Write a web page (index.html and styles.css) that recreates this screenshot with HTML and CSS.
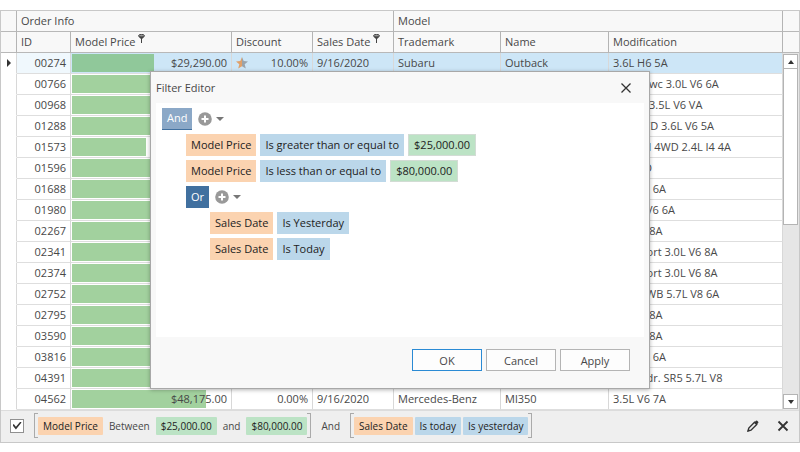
FILE: index.html
```html
<!DOCTYPE html>
<html lang="en">
<head>
    <meta charset="UTF-8">
    <meta name="viewport" content="width=device-width, initial-scale=1.0">
    <title>Filter Editor</title>
    <link rel="stylesheet" href="styles.css">
</head>
<body>
    <div class="grid">
        <div class="grid-main">
            <table class="data">
                <colgroup>
                    <col class="col-mark">
                    <col class="col-id">
                    <col class="col-price">
                    <col class="col-discount">
                    <col class="col-date">
                    <col class="col-trademark">
                    <col class="col-name">
                    <col>
                </colgroup>
                <thead>
                    <tr>
                        <th></th>
                        <th colspan="4">Order Info</th>
                        <th colspan="3">Model</th>
                    </tr>
                    <tr>
                        <th></th>
                        <th>ID</th>
                        <th>Model Price <svg class="pin" viewBox="0 0 7 9"><ellipse cx="3.5" cy="1.8" rx="3" ry="1.4" fill="#999" stroke="#444"/><path d="M.5 2.5 3 5v4h1V5l2.500-2.500z" fill="#444"/></svg></th>
                        <th>Discount</th>
                        <th>Sales Date <svg class="pin" viewBox="0 0 7 9"><ellipse cx="3.5" cy="1.8" rx="3" ry="1.4" fill="#999" stroke="#444"/><path d="M.5 2.5 3 5v4h1V5l2.500-2.500z" fill="#444"/></svg></th>
                        <th>Trademark</th>
                        <th>Name</th>
                        <th>Modification</th>
                    </tr>
                </thead>
                <tbody>
                    <tr class="selected">
                        <td class="mark"><svg class="row-arrow" viewBox="0 0 4 8"><path d="M0 0l4 4-4 4z" fill="#333"/></svg></td>
                        <td class="id">00274</td>
                        <td class="price"><div class="price-box"><div class="bar" style="width: 52%"></div><span>$29,290.00</span></div></td>
                        <td class="discount"><div class="discount-box"><svg class="star" viewBox="0 0 12 12"><path d="M6 0l1.700 4.100 4.300.3-3.300 2.800 1.100 4.300L6 9.200z" fill="#9aa3ab"/><path d="M6 0L4.300 4.100 0 4.400l3.300 2.800-1.100 4.300L6 9.200z" fill="#e0a069"/></svg><span>10.00%</span></div></td>
                        <td>9/16/2020</td><td>Subaru</td><td>Outback</td><td>3.6L H6 5A</td>
                    </tr>
                    <tr>
                        <td></td><td class="id">00766</td>
                        <td class="price"><div class="price-box"><div class="bar" style="width: 90%"></div></div></td>
                        <td></td><td></td><td></td><td></td><td>Coupe wc 3.0L V6 6A</td>
                    </tr>
                    <tr>
                        <td></td><td class="id">00968</td>
                        <td class="price"><div class="price-box"><div class="bar" style="width: 62%"></div></div></td>
                        <td></td><td></td><td></td><td></td><td>Coupe 3.5L V6 VA</td>
                    </tr>
                    <tr>
                        <td></td><td class="id">01288</td>
                        <td class="price"><div class="price-box"><div class="bar" style="width: 58%"></div></div></td>
                        <td></td><td></td><td></td><td></td><td>SLT 4WD 3.6L V6 5A</td>
                    </tr>
                    <tr>
                        <td></td><td class="id">01573</td>
                        <td class="price"><div class="price-box"><div class="bar" style="width: 47%"></div></div></td>
                        <td></td><td></td><td></td><td></td><td>Limited 4WD 2.4L I4 4A</td>
                    </tr>
                    <tr>
                        <td></td><td class="id">01596</td>
                        <td class="price"><div class="price-box"><div class="bar" style="width: 70%"></div></div></td>
                        <td></td><td></td><td></td><td></td><td>LT 4WD</td>
                    </tr>
                    <tr>
                        <td></td><td class="id">01688</td>
                        <td class="price"><div class="price-box"><div class="bar" style="width: 80%"></div></div></td>
                        <td></td><td></td><td></td><td></td><td>4.8L V8 6A</td>
                    </tr>
                    <tr>
                        <td></td><td class="id">01980</td>
                        <td class="price"><div class="price-box"><div class="bar" style="width: 66%"></div></div></td>
                        <td></td><td></td><td></td><td></td><td>S 3.0L V6 6A</td>
                    </tr>
                    <tr>
                        <td></td><td class="id">02267</td>
                        <td class="price"><div class="price-box"><div class="bar" style="width: 75%"></div></div></td>
                        <td></td><td></td><td></td><td></td><td>3.0L I6 8A</td>
                    </tr>
                    <tr>
                        <td></td><td class="id">02341</td>
                        <td class="price"><div class="price-box"><div class="bar" style="width: 88%"></div></div></td>
                        <td></td><td></td><td></td><td></td><td>SLE Sport 3.0L V6 8A</td>
                    </tr>
                    <tr>
                        <td></td><td class="id">02374</td>
                        <td class="price"><div class="price-box"><div class="bar" style="width: 92%"></div></div></td>
                        <td></td><td></td><td></td><td></td><td>SLE Sport 3.0L V6 8A</td>
                    </tr>
                    <tr>
                        <td></td><td class="id">02752</td>
                        <td class="price"><div class="price-box"><div class="bar" style="width: 60%"></div></div></td>
                        <td></td><td></td><td></td><td></td><td>4WD LWB 5.7L V8 6A</td>
                    </tr>
                    <tr>
                        <td></td><td class="id">02795</td>
                        <td class="price"><div class="price-box"><div class="bar" style="width: 84%"></div></div></td>
                        <td></td><td></td><td></td><td></td><td>3.0L I6 8A</td>
                    </tr>
                    <tr>
                        <td></td><td class="id">03590</td>
                        <td class="price"><div class="price-box"><div class="bar" style="width: 86%"></div></div></td>
                        <td></td><td></td><td></td><td></td><td>3.0L I6 8A</td>
                    </tr>
                    <tr>
                        <td></td><td class="id">03816</td>
                        <td class="price"><div class="price-box"><div class="bar" style="width: 78%"></div></div></td>
                        <td></td><td></td><td></td><td></td><td>4.8L V8 6A</td>
                    </tr>
                    <tr>
                        <td></td><td class="id">04391</td>
                        <td class="price"><div class="price-box"><div class="bar" style="width: 64%"></div></div></td>
                        <td></td><td></td><td></td><td></td><td>4WD 4dr. SR5 5.7L V8</td>
                    </tr>
                    <tr>
                        <td></td><td class="id">04562</td>
                        <td class="price"><div class="price-box"><div class="bar" style="width: 85%"></div><span>$48,175.00</span></div></td>
                        <td class="discount">0.00%</td>
                        <td>9/16/2020</td><td>Mercedes-Benz</td><td>Ml350</td><td>3.5L V6 7A</td>
                    </tr>
                </tbody>
            </table>
            <div class="side">
                <div class="side-head"></div>
                <div class="side-head"></div>
                <div class="scrollbar">
                    <button class="scroll-btn" aria-label="Scroll up"><svg viewBox="0 0 6 4"><path d="M0 4l3-4 3 4z"/></svg></button>
                    <div class="thumb"></div>
                    <button class="scroll-btn down" aria-label="Scroll down"><svg viewBox="0 0 6 4"><path d="M0 0l3 4 3-4z"/></svg></button>
                </div>
            </div>
        </div>

        <div class="filter-panel">
            <input type="checkbox" class="filter-check" aria-label="Enable filter" checked>
            <div class="bracket">
                <button class="tag field">Model Price</button>
                <span class="word">Between</span>
                <button class="tag value">$25,000.00</button>
                <span class="word">and</span>
                <button class="tag value">$80,000.00</button>
            </div>
            <span class="joiner">And</span>
            <div class="bracket">
                <button class="tag field">Sales Date</button>
                <button class="tag operator">Is today</button>
                <button class="tag operator">Is yesterday</button>
            </div>
            <div class="panel-tools">
                <button class="tool" aria-label="Edit filter"><svg viewBox="0 0 12 12"><path d="M1 11l.8-3L7.500 2.300l2.200 2.200L4 10.200z" fill="none" stroke="#333" stroke-width="1.400"/><path d="M7.500 2.300L9 .8q.6-.5 1.200 0l1 1q.5.6 0 1.200L9.700 4.500z" fill="#333"/><path d="M.5 11.500l.6-2 1.400 1.400z" fill="#333"/></svg></button>
                <button class="tool" aria-label="Clear filter"><svg viewBox="0 0 12 12"><path d="M1.500 1.500l9 9m0-9l-9 9" stroke="#333" stroke-width="1.800"/></svg></button>
            </div>
        </div>

        <div class="dialog" role="dialog" aria-labelledby="dialogTitle">
            <div class="dialog-head">
                <span id="dialogTitle">Filter Editor</span>
                <button class="close" aria-label="Close"><svg viewBox="0 0 12 12"><path d="M1.500 1.500l9 9m0-9l-9 9" stroke="#333" stroke-width="1.300"/></svg></button>
            </div>
            <ul class="tree">
                <li>
                    <div class="line">
                        <button class="chip logic active">And</button>
                        <button class="add" aria-label="Add condition"><svg class="plus" viewBox="0 0 14 14"><circle cx="7" cy="7" r="6.800"/><path d="M7 3.500v7M3.500 7h7"/></svg><svg class="caret" viewBox="0 0 8 4"><path d="M0 0h8L4 4z"/></svg></button>
                    </div>
                    <ul>
                        <li class="line">
                            <button class="chip field">Model Price</button>
                            <button class="chip operator">Is greater than or equal to</button>
                            <button class="chip value">$25,000.00</button>
                        </li>
                        <li class="line">
                            <button class="chip field">Model Price</button>
                            <button class="chip operator">Is less than or equal to</button>
                            <button class="chip value">$80,000.00</button>
                        </li>
                        <li>
                            <div class="line">
                                <button class="chip logic">Or</button>
                                <button class="add" aria-label="Add condition"><svg class="plus" viewBox="0 0 14 14"><circle cx="7" cy="7" r="6.800"/><path d="M7 3.500v7M3.500 7h7"/></svg><svg class="caret" viewBox="0 0 8 4"><path d="M0 0h8L4 4z"/></svg></button>
                            </div>
                            <ul>
                                <li class="line">
                                    <button class="chip field">Sales Date</button>
                                    <button class="chip operator">Is Yesterday</button>
                                </li>
                                <li class="line">
                                    <button class="chip field">Sales Date</button>
                                    <button class="chip operator">Is Today</button>
                                </li>
                            </ul>
                        </li>
                    </ul>
                </li>
            </ul>
            <div class="dialog-foot">
                <button class="btn primary">OK</button>
                <button class="btn">Cancel</button>
                <button class="btn">Apply</button>
            </div>
        </div>
    </div>
</body>
</html>
```
FILE: styles.css
```css
* {
    box-sizing: border-box;
}

body {
    margin: 0;
    padding-top: 10px;
    font-family: "Segoe UI", "Open Sans", "Noto Sans", sans-serif;
    font-size: 11px;
    color: #484848;
    background: #fff;
}

button {
    margin: 0;
    padding: 0;
    border: none;
    background: none;
    font: inherit;
    color: inherit;
    cursor: pointer;
}

svg {
    display: block;
}

/* Data grid */
.grid {
    position: relative;
    border: 1px solid #c8c8c8;
}

.grid-main {
    display: flex;
}

.data {
    flex: 1;
    width: 0;
    table-layout: fixed;
    border-collapse: separate;
    border-spacing: 0;
}

.col-mark {
    width: 16px;
}

.col-id {
    width: 54px;
}

.col-price {
    width: 161px;
}

.col-discount,
.col-date {
    width: 81px;
}

.col-trademark {
    width: 107px;
}

.col-name {
    width: 108px;
}

th,
td {
    height: 21px;
    padding: 0 4px;
    line-height: 20px;
    text-align: left;
    white-space: nowrap;
    overflow: hidden;
}

th {
    font-weight: normal;
    background: #f8f8f8;
    border-right: 1px solid #b4b4b4;
    border-bottom: 1px solid #b8b8b8;
}

td {
    border-right: 1px solid #d8d8d8;
    border-bottom: 1px solid #dedede;
}

td:first-child {
    border-bottom-color: #fff;
}

.selected td {
    background: #cde6f7;
}

.selected .mark {
    background: #fff;
}

.selected .id {
    background: #f0f8fd;
}

.row-arrow {
    width: 4px;
    height: 8px;
    margin-left: 2px;
}

.pin {
    display: inline-block;
    width: 7px;
    height: 9px;
    vertical-align: 3px;
}

.id,
.discount {
    text-align: right;
}

.data .price {
    padding: 0 1px;
}

.price-box {
    display: grid;
    align-items: center;
    height: 20px;
}

.price-box > * {
    grid-area: 1 / 1;
}

.price-box span {
    padding-right: 3px;
    text-align: right;
}

.bar {
    height: 18px;
    background: #a2d19e;
}

.selected .bar {
    background: #90c89a;
}

.discount-box {
    display: flex;
    align-items: center;
    justify-content: space-between;
}

.star {
    width: 12px;
    height: 12px;
}

/* Scroll column */
.side {
    display: flex;
    flex-direction: column;
    width: 16px;
}

.side-head {
    height: 21px;
    background: #f8f8f8;
    border-bottom: 1px solid #b8b8b8;
}

.scrollbar {
    flex: 1;
    display: flex;
    flex-direction: column;
    padding: 1px 1px 1px 0;
    background: #e6e6e6;
}

.scroll-btn {
    display: flex;
    align-items: center;
    justify-content: center;
    height: 15px;
    background: #fff;
    border: 1px solid #b4b4b4;
}

.scroll-btn svg {
    width: 6px;
    height: 4px;
    fill: #333;
}

.thumb {
    height: 44%;
    background: #fff;
    border: 1px solid #b4b4b4;
    border-top: none;
}

.down {
    margin-top: auto;
}

/* Filter panel */
.filter-panel {
    display: flex;
    align-items: center;
    height: 32px;
    padding: 0 10px 2px 9px;
    font-size: 10px;
    background: #efefef;
    border-top: 1px solid #dcdcdc;
}

.filter-check {
    appearance: none;
    display: grid;
    place-items: center;
    width: 14px;
    height: 14px;
    margin: 0 10px 0 0;
    background: #fff;
    border: 1px solid #909090;
}

.filter-check:checked::before {
    content: "";
    width: 9px;
    height: 8px;
    background: #333;
    clip-path: polygon(0 48%, 14% 32%, 38% 66%, 88% 0, 100% 14%, 38% 100%);
}

.bracket {
    display: flex;
    align-items: center;
    gap: 2px;
    height: 23px;
}

.bracket::before,
.bracket::after {
    content: "";
    width: 3px;
    height: 23px;
    border: 1px solid #aaa;
}

.bracket::before {
    margin-right: -2px;
    border-right: none;
}

.bracket::after {
    margin-left: -2px;
    border-left: none;
}

.tag {
    height: 18px;
    padding: 0 5px;
    line-height: 18px;
    border-radius: 1px;
    color: #222;
}

.word {
    padding: 0 4px;
}

.joiner {
    padding: 0 10px;
}

.field {
    background: #fbd3b0;
}

.operator {
    background: #bbd7ea;
}

.value {
    background: #bce3c5;
}

.panel-tools {
    display: flex;
    gap: 18px;
    margin-left: auto;
}

.tool svg,
.close svg {
    width: 12px;
    height: 12px;
}

/* Filter editor */
.dialog {
    position: absolute;
    top: 60px;
    left: 0;
    right: 0;
    width: 500px;
    margin: 0 auto;
    padding: 0 5px;
    background: #f8f8f8;
    border: 1px solid #a8a8a8;
    box-shadow: 0 1px 4px rgba(0, 0, 0, 0.3);
}

.dialog-head {
    display: flex;
    align-items: center;
    justify-content: space-between;
    height: 31px;
    padding-right: 12px;
}

.tree {
    min-height: 234px;
    padding: 5px 6px;
    background: #fff;
}

ul {
    display: flex;
    flex-direction: column;
    gap: 4px;
    margin: 0;
    padding: 0;
    list-style: none;
}

ul ul {
    margin-top: 4px;
    padding-left: 24px;
}

.line {
    display: flex;
    gap: 4px;
}

.chip {
    height: 22px;
    padding: 0 5px 2px;
    color: #222;
}

.chip.value {
    border: 1px solid #d2dcd4;
}

.chip.logic {
    color: #fff;
    background: #41709f;
}

.chip.active {
    background: #8ba8c7;
    border-bottom: 1px solid #41709f;
}

.add {
    display: flex;
    align-items: center;
    gap: 4px;
    padding: 0 2px;
}

.plus {
    width: 14px;
    height: 14px;
    fill: #999;
    stroke: #fff;
    stroke-width: 2;
}

.plus circle {
    stroke: none;
}

.caret {
    width: 8px;
    height: 4px;
    fill: #777;
}

.dialog-foot {
    display: flex;
    justify-content: flex-end;
    gap: 4px;
    padding: 12px 14px 17px;
}

.btn {
    width: 70px;
    height: 22px;
    background: #fdfdfd;
    border: 1px solid #b4b4b4;
}

.primary {
    border-color: #2a8ad4;
}
```
